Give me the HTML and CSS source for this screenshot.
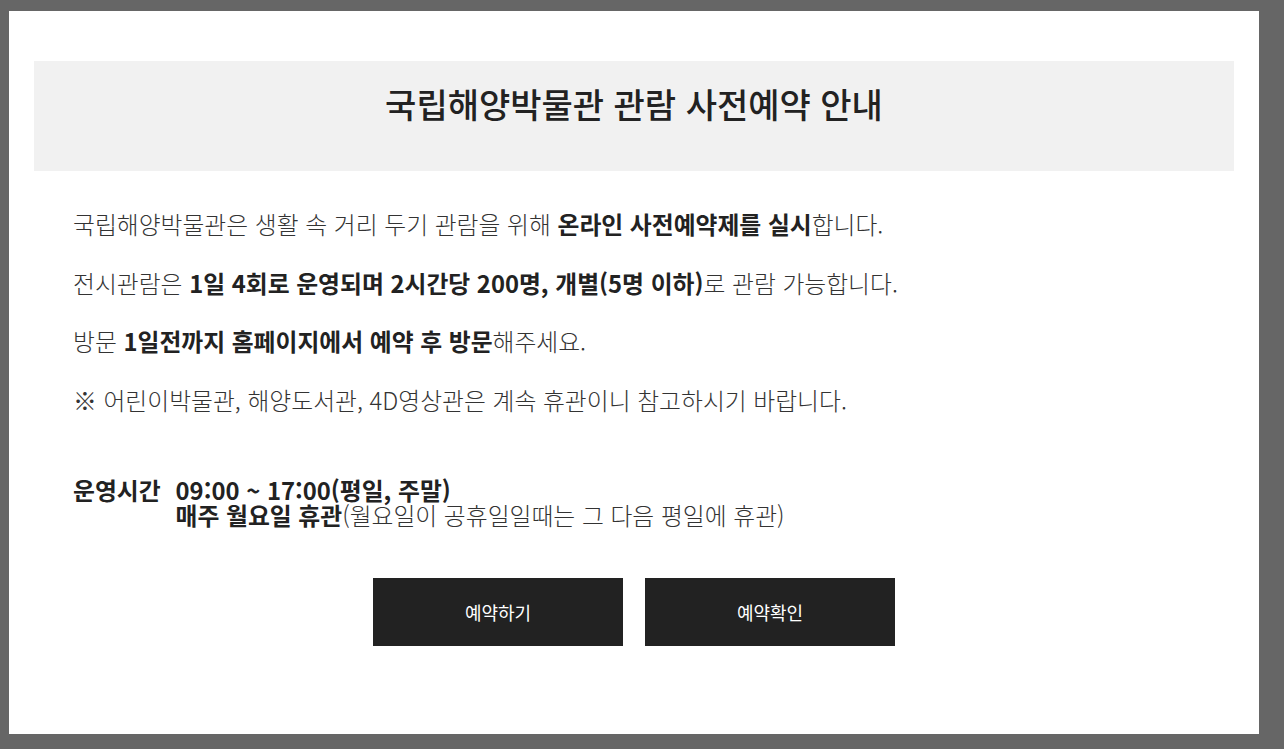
FILE: index.html
```html
<!DOCTYPE html>
<html lang="ko">
<head>
<meta charset="utf-8">
<title>국립해양박물관 관람 사전예약 안내</title>
<link rel="stylesheet" href="styles.css">
</head>
<body>
<div class="modal">
  <div class="modal-head">
    <h1 class="modal-title">국립해양박물관 관람 사전예약 안내</h1>
  </div>
  <div class="modal-body">
    <p class="notice">국립해양박물관은 생활 속 거리 두기 관람을 위해 <strong>온라인 사전예약제를 실시</strong>합니다.</p>
    <p class="notice">전시관람은 <strong>1일 4회로 운영되며 2시간당 200명, 개별(5명 이하)</strong>로 관람 가능합니다.</p>
    <p class="notice">방문 <strong>1일전까지 홈페이지에서 예약 후 방문</strong>해주세요.</p>
    <p class="notice">※ 어린이박물관, 해양도서관, 4D영상관은 계속 휴관이니 참고하시기 바랍니다.</p>
    <div class="hours">
      <div class="hours-label">운영시간</div>
      <div class="hours-info">
        <div class="hours-line"><strong>09:00 ~ 17:00(평일, 주말)</strong></div>
        <div class="hours-line"><strong>매주 월요일 휴관</strong>(월요일이 공휴일일때는 그 다음 평일에 휴관)</div>
      </div>
    </div>
  </div>
  <div class="modal-actions">
    <a class="btn" href="#">예약하기</a>
    <a class="btn" href="#">예약확인</a>
  </div>
</div>
</body>
</html>
```

FILE: styles.css
```css
html, body {
  margin: 0;
  padding: 0;
}
body {
  background: #666666;
  font-family: "Noto Sans CJK KR", "Noto Sans", sans-serif;
  color: #222222;
  padding: 11px 0 0 9px;
  height: 749px;
  box-sizing: border-box;
}
.modal {
  width: 1250px;
  height: 723px;
  background: #ffffff;
  box-sizing: border-box;
  padding: 50px 25px 0 25px;
}
.modal-head {
  background: #f1f1f1;
  height: 110px;
  box-sizing: border-box;
  padding-top: 19px;
}
.modal-title {
  margin: 0;
  text-align: center;
  font-size: 34px;
  line-height: 48px;
  font-weight: 500;
  color: #222222;
}
.modal-body {
  padding: 35px 39px 0 39px;
}
.notice {
  margin: 0 0 23.6px 0;
  font-size: 23.8px;
  line-height: 35px;
  font-weight: 300;
  color: #333333;
}
strong {
  font-weight: 700;
  color: #222222;
}
.hours {
  display: flex;
  gap: 15px;
  margin-top: 60px;
  font-size: 23.8px;
  line-height: 25px;
  font-weight: 300;
  color: #333333;
}
.hours-label {
  font-weight: 700;
  color: #222222;
}
.modal-actions {
  display: flex;
  justify-content: center;
  gap: 22px;
  margin-top: 51px;
}
.btn {
  width: 250px;
  height: 68px;
  background: #222222;
  color: #ffffff;
  display: flex;
  align-items: center;
  justify-content: center;
  text-decoration: none;
  font-size: 18px;
  font-weight: 400;
}
```
